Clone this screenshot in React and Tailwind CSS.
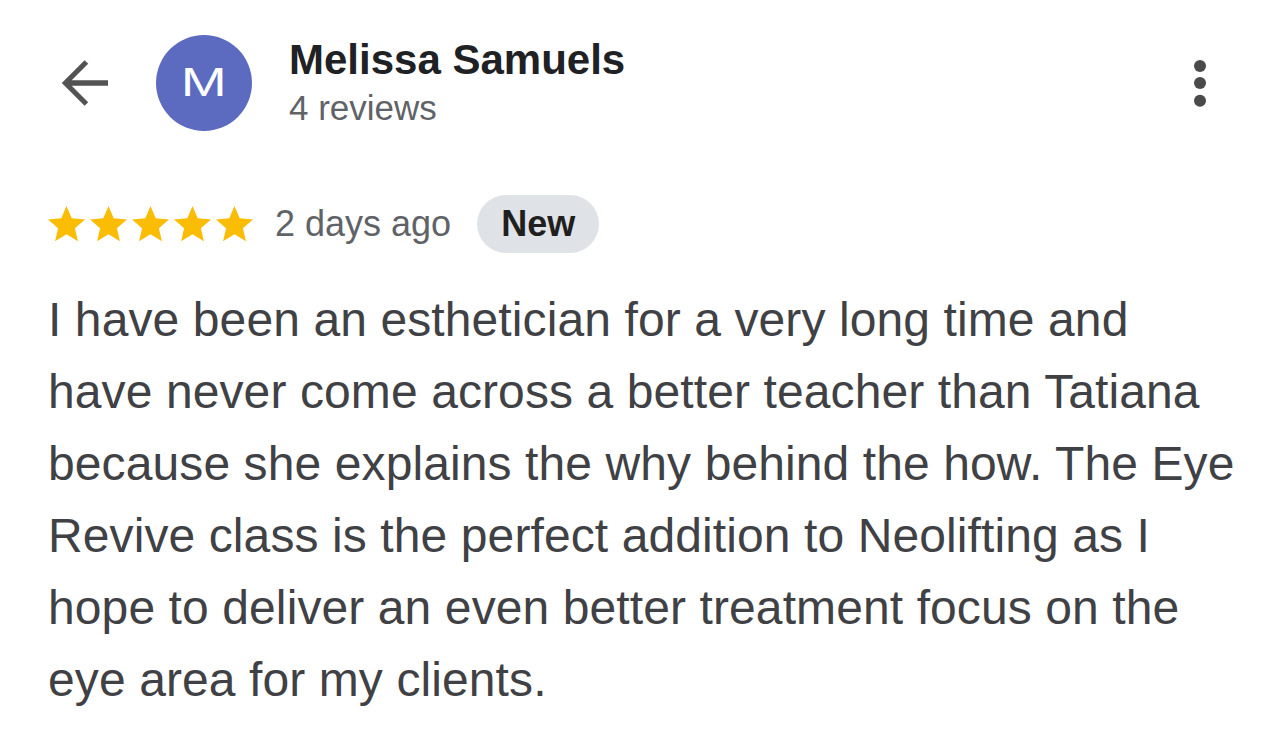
import React from "react";

const Star = () => (
  <svg viewBox="2 2 20 20" className="w-[37px] h-[37px] shrink-0" aria-hidden="true">
    <path
      fill="#fbbc04"
      d="M12 17.27L18.18 21l-1.64-7.03L22 9.24l-7.19-.61L12 2 9.19 8.63 2 9.24l5.46 4.73L5.82 21z"
    />
  </svg>
);

const lines = [
  "I have been an esthetician for a very long time and",
  "have never come across a better teacher than Tatiana",
  "because she explains the why behind the how. The Eye",
  "Revive class is the perfect addition to Neolifting as I",
  "hope to deliver an even better treatment focus on the",
  "eye area for my clients.",
];

export default function App() {
  return (
    <div className="w-[1284px] h-[753px] bg-white overflow-hidden px-12 font-['Liberation_Sans',Arial,sans-serif]">
      {/* Header */}
      <div className="mt-[35px] h-[96px] flex items-center">
        <svg viewBox="0 0 24 24" className="w-[72px] h-[72px] shrink-0" aria-hidden="true">
          <path
            fill="#535353"
            d="M20 11.1H7.9l5.5-5.5L12.2 4.4 4.6 12l7.6 7.6 1.2-1.2-5.5-5.5H20v-1.8z"
          />
        </svg>
        <div className="ml-9 w-24 h-24 rounded-full bg-[#5c6bc0] flex items-center justify-center shrink-0">
          <span className="text-white text-[40px] leading-none inline-block scale-x-[1.38] -mt-[3px]">M</span>
        </div>
        <div className="ml-[37px] flex flex-col">
          <div className="text-[42px] leading-[48px] font-bold text-[#202124]">Melissa Samuels</div>
          <div className="mt-[2.5px] text-[35px] leading-[44px] text-[#5f6368]">4 reviews</div>
        </div>
        <div className="ml-auto">
          <svg viewBox="0 0 24 24" className="w-[72px] h-[72px]" aria-hidden="true">
            <circle cx="12" cy="6.3" r="2" fill="#4a4a4a" />
            <circle cx="12" cy="12" r="2" fill="#4a4a4a" />
            <circle cx="12" cy="17.9" r="2" fill="#4a4a4a" />
          </svg>
        </div>
      </div>

      {/* Rating row */}
      <div className="mt-16 h-[58px] flex items-center">
        <div className="flex items-center gap-[5px] mt-[1px]">
          <Star />
          <Star />
          <Star />
          <Star />
          <Star />
        </div>
        <span className="ml-[22px] text-[36px] leading-[44px] text-[#5f6368]">2 days ago</span>
        <span className="ml-[26px] h-[58px] px-6 rounded-full bg-[#dfe2e6] flex items-center text-[36px] font-bold text-[#1f1f1f]">
          New
        </span>
      </div>

      {/* Body */}
      <div className="mt-[31px] text-[48px] leading-[72px] tracking-[0.1px] text-[#3f4145] whitespace-nowrap">
        {lines.map((l, i) => (
          <div key={i}>{l}</div>
        ))}
      </div>
    </div>
  );
}
